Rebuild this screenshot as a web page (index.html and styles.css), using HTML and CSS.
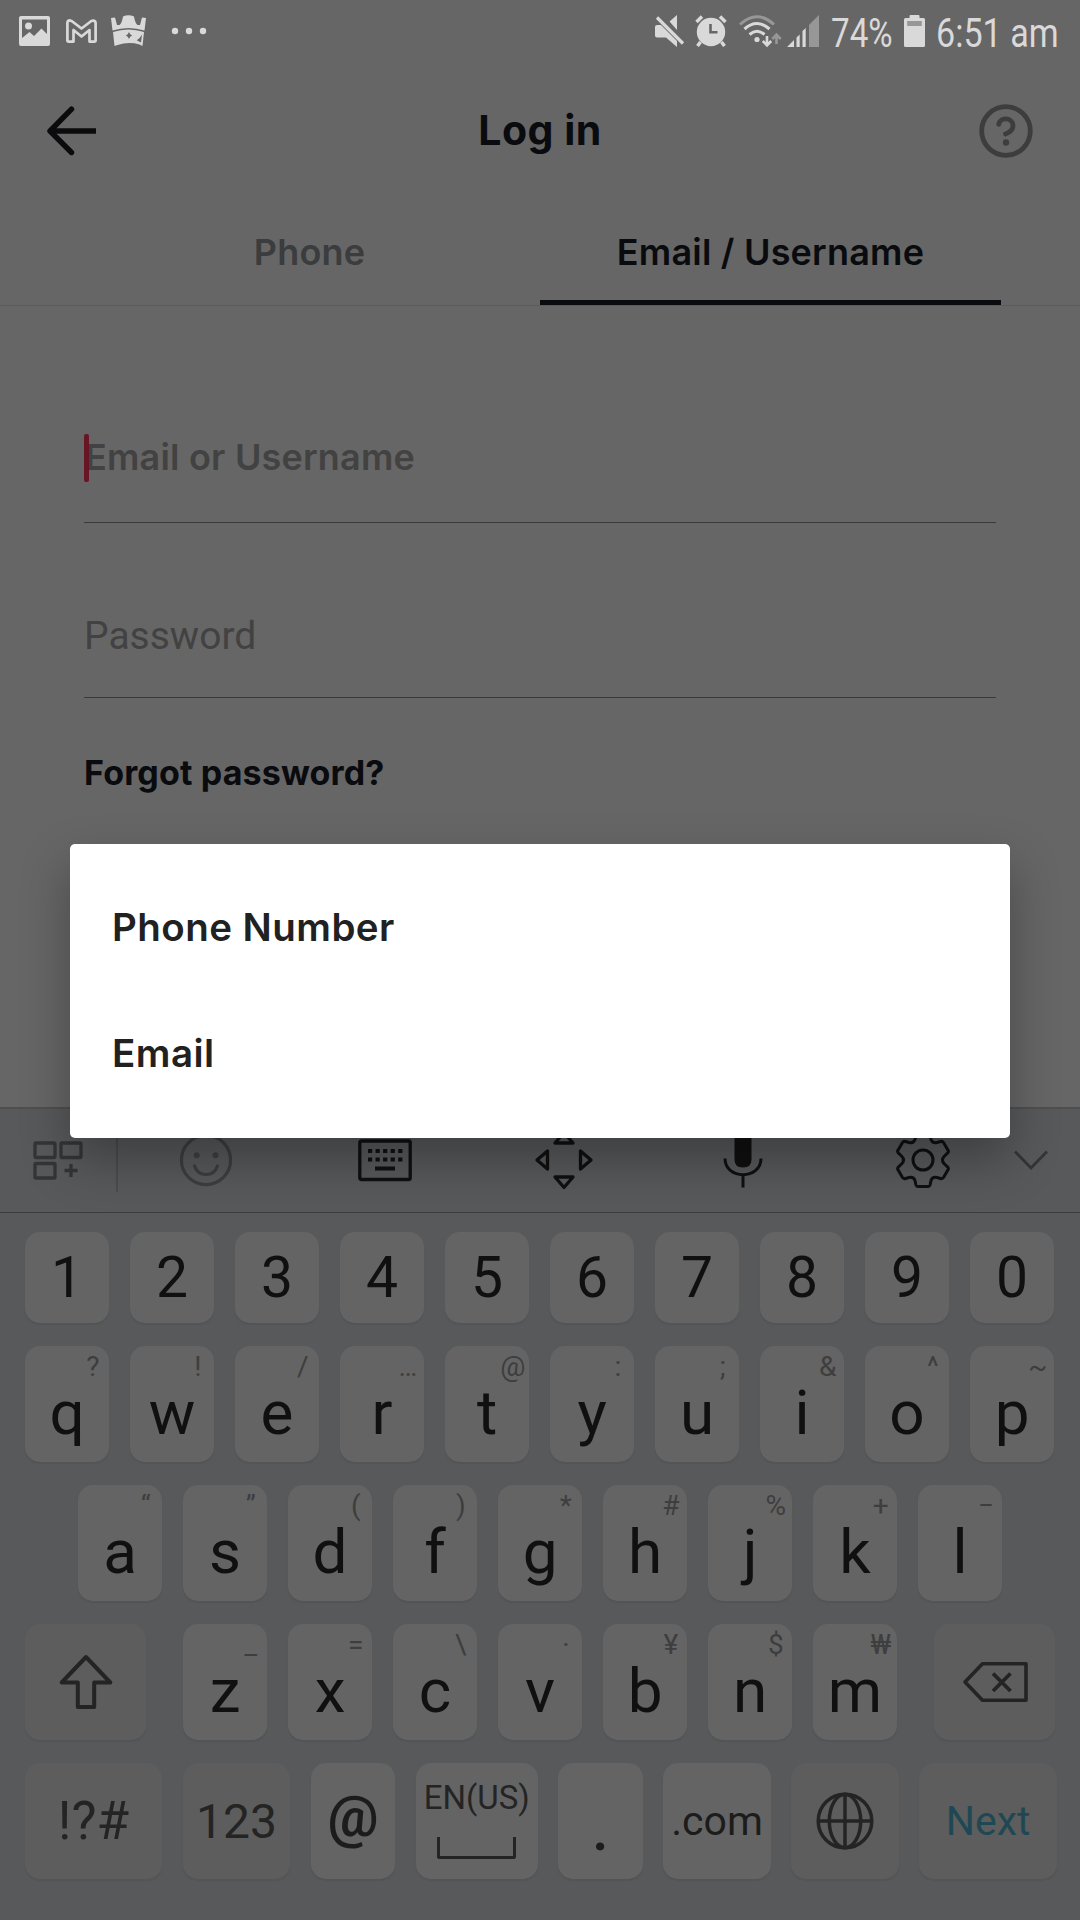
FILE: index.html
```html
<!DOCTYPE html>
<html lang="en">
<head>
<meta charset="utf-8">
<title>Log in</title>
<link rel="stylesheet" href="styles.css">
</head>
<body>
<div class="screen">
  <div class="status">
    <svg class="s-image" width="31" height="30" viewBox="0 0 31 30"><path fill="currentColor" fill-rule="evenodd" d="M2 0H29Q31 0 31 2V28Q31 30 29 30H2Q0 30 0 28V2Q0 0 2 0ZM3 3.5V22L10.500 16L15 20L22.500 12.500L28 18V3.500Z"/><circle cx="9.500" cy="10" r="3.500" fill="currentColor"/></svg>
    <svg class="s-mail" width="31" height="24" viewBox="0 0 31 24"><path fill="none" stroke="currentColor" stroke-width="2.700" stroke-linejoin="round" d="M1.400 21.500V4Q1.400 1.300 4 1.400L6 2.200L15.500 9.500L25 2.200Q27.500 .7 29.200 2.500L29.600 4V21.500Q29.600 22.600 28.300 22.600H23.500V11L15.500 17.500L7.500 11V22.600H2.700Q1.400 22.600 1.400 21.500Z"/></svg>
    <svg class="s-crown" width="35" height="32" viewBox="0 0 35 32"><path fill="currentColor" d="M0 3L4 2.500L6 10H8.500Q11 8 12 1.500Q17.500-1 23 1.500Q24 8 26.500 10H29L31 2.500L35 3L33.500 15.500Q17.500 10.500 1.500 15.500Z"/><path fill="currentColor" fill-rule="evenodd" d="M2 17Q17.500 12 33 17L31.500 31L28.500 29.500Q17.500 26.500 6.500 30L3.500 31ZM18 17L16.800 19.300L14.800 20.500L16.800 21.700L18 24L19.200 21.700L21.200 20.500L19.200 19.300ZM31 19.500Q29 23.500 25.700 25.300L30 27.500Z"/></svg>
    <svg class="s-more" width="36" height="8" viewBox="0 0 36 8"><g fill="currentColor"><circle cx="4" cy="4" r="3.200"/><circle cx="18" cy="4" r="3.200"/><circle cx="32" cy="4" r="3.200"/></g></svg>
    <svg class="s-mute" width="30" height="32" viewBox="0 0 30 32"><path fill="currentColor" d="M22 0V15L14.500 6.500ZM0 12Q0 10 2 10H6L22 26V32L11 22.500H2Q0 22.500 0 20.500Z"/><path stroke="currentColor" stroke-width="3.200" d="M2 2.500L28 28.500"/></svg>
    <svg class="s-alarm" width="32" height="32" viewBox="0 0 32 32"><circle cx="16" cy="17" r="14.200" fill="currentColor"/><path fill="none" stroke="currentColor" stroke-width="3.500" d="M1.500 7L7 1.500M25 1.500L30.500 7M5.500 27L2.500 31M26.500 27L29.500 31"/><path fill="none" stroke="#666" stroke-width="2.600" d="M15.500 9V17.200H22.500"/></svg>
    <svg class="s-wifi" width="43" height="33" viewBox="0 0 43 33"><g fill="none" stroke="currentColor" stroke-width="3"><path stroke="#979797" d="M1 9.500Q18 -6 35 9.500"/><path d="M5.500 14Q18 3 30.500 14M10.500 19.500Q18 13 25.500 19.500"/></g><circle cx="18" cy="24.500" r="2.600" fill="currentColor"/><path fill="none" stroke="currentColor" stroke-width="2.600" d="M28 21V30M23.800 26L28 30.300L32.200 26"/><path fill="none" stroke="#979797" stroke-width="2.600" d="M37.500 29V20M33.300 24L37.500 19.700L41.700 24"/></svg>
    <svg class="s-signal" width="32" height="32" viewBox="0 0 32 32"><path fill="currentColor" d="M0 32L7 25V32ZM9.500 22.500L12.700 19.500V32H9.500ZM15.500 16L18.700 13V32H15.500Z"/><path fill="#979797" d="M22 10L32 0V32H22Z"/></svg>
    <div class="s-pct"><span class="st">74%</span></div>
    <svg class="s-batt" width="21" height="32" viewBox="0 0 21 32"><path fill="currentColor" d="M1.500 3H5.500V1Q5.500 0 6.500 0H14.500Q15.500 0 15.500 1V3H19.500Q21 3 21 4.500V30.500Q21 32 19.500 32H1.500Q0 32 0 30.500V4.500Q0 3 1.500 3Z"/><path fill="#979797" d="M3.200 6H17.800V11H3.200Z"/></svg>
    <div class="s-time"><span class="st">6:51 am</span></div>
  </div>

  <header class="header">
    <svg width="50" height="50" viewBox="0 0 50 50"><path fill="none" stroke="#0b0b0d" stroke-width="5.400" stroke-linecap="round" stroke-linejoin="round" d="M24.500 3.200L3 25L24.500 46.500"/><path stroke="#0b0b0d" stroke-width="5.400" d="M4 25H49"/></svg>
    <h1 class="title">Log in</h1>
    <svg width="54" height="54" viewBox="0 0 54 54"><g fill="none" stroke="#3d3d3e" stroke-width="4.800" stroke-linecap="round"><circle cx="27" cy="27" r="24.300"/><path d="M19.800 20.200C20.500 16.500 23.500 14.800 26.500 14.800C30.500 14.800 34 17.500 34 21.800C34 26.500 30.500 28.500 26.500 30"/></g><circle cx="27" cy="38.500" r="3.200" fill="#3d3d3e"/></svg>
  </header>

  <nav class="tabs">
    <div class="tab"><span class="tab-phone">Phone</span></div>
    <div class="tab active"><span class="tab-email">Email / Username</span></div>
  </nav>

  <main class="form">
    <div class="field user"><span class="caret"></span><span class="user-text">Email or Username</span></div>
    <div class="field pass">Password</div>
    <div class="forgot"><span>Forgot password?</span></div>
  </main>

  <section class="keyboard">
    <div class="toolbar">
      <div class="cell edge"><svg width="50" height="56" viewBox="33 1131.500 50 56"><g fill="none" stroke="#353535" stroke-width="3.300"><rect x="35" y="1142.500" width="20" height="14.500" rx="1"/><rect x="61" y="1142.500" width="20" height="14.500" rx="1"/><rect x="35" y="1163" width="20" height="14.500" rx="1"/><path d="M64.500 1170H77.500M71 1163.500V1176.500"/></g></svg></div>
      <div class="cell split"><svg width="56" height="56" viewBox="0 0 56 56"><g fill="none" stroke="#3e3e3e" stroke-width="3.200" stroke-linecap="round"><circle cx="28" cy="28" r="24.600"/><path d="M16.500 34Q19.500 42.500 28 42.500Q36.500 42.500 39.500 34"/></g><circle cx="18.700" cy="23.300" r="3" fill="#404040"/><circle cx="37.500" cy="23.300" r="3" fill="#404040"/></svg></div>
      <div class="cell"><svg width="56" height="56" viewBox="0 0 56 56"><rect x="2.800" y="9" width="50.400" height="38.500" rx="1.500" fill="none" stroke="#101010" stroke-width="3.300"/><path stroke="#101010" stroke-width="4" stroke-dasharray="4.200 3.350" d="M11 19H46M11 27.500H46"/><path stroke="#101010" stroke-width="4" d="M18 36.500H38"/></svg></div>
      <div class="cell"><svg width="60" height="60" viewBox="-30 -30 60 60"><g fill="none" stroke="#101010" stroke-width="3.300" stroke-linejoin="round"><path d="M16.500 -9V9L27 0Z"/><path d="M-16.500 -9V9L-27 0Z"/><path d="M-9 17H9L0 27.500Z"/><path d="M-9 -17H9L0 -27.500Z"/></g></svg></div>
      <div class="cell"><svg width="44" height="60" viewBox="-22 -30 44 60"><path fill="#101010" d="M-8.500 -20Q-8.500 -28 0 -28Q8.500 -28 8.500 -20V-.5Q8.500 7.500 0 7.500Q-8.500 7.500 -8.500 -.5Z"/><path fill="none" stroke="#101010" stroke-width="3" d="M-18 -1.500C-18 20 18 20 18 -1.500M0 15V27.500"/></svg></div>
      <div class="cell"><svg class="gear" width="58" height="60" viewBox="-29 -30 58 60"><g fill="none" stroke="#101010" stroke-width="3" stroke-linejoin="round"><circle r="10"/><path d="M-5 26.500H5Q6.700 26.500 7.200 24.500L8 20.500Q9.500 16.500 14 17.500L17.500 18.500Q19.500 19 20.500 17.500L25 9.800Q26 8.300 24.500 6.800L21.500 4Q17.500 0 21.500 -4L24.500 -6.800Q26 -8.300 25 -9.800L20.500 -17.500Q19.500 -19 17.500 -18.500L14 -17.500Q9.500 -16.500 8 -20.500L7.200 -24.500Q6.700 -26.500 5 -26.500H-5Q-6.700 -26.500 -7.200 -24.500L-8 -20.500Q-9.500 -16.500 -14 -17.500L-17.500 -18.500Q-19.500 -19 -20.500 -17.500L-25 -9.800Q-26 -8.300 -24.500 -6.800L-21.500 -4Q-17.500 0 -21.500 4L-24.500 6.800Q-26 8.300 -25 9.800L-20.500 17.500Q-19.500 19 -17.500 18.500L-14 17.500Q-9.500 16.500 -8 20.500L-7.200 24.500Q-6.700 26.500 -5 26.500Z"/></g></svg></div>
      <div class="cell last"><svg width="36" height="20" viewBox="0 0 36 20"><path fill="none" stroke="#353535" stroke-width="2.800" d="M2 1.500L18 18L34 1.500"/></svg></div>
    </div>

    <div class="keys">
      <div class="row numbers">
        <div class="key">1</div><div class="key">2</div><div class="key">3</div><div class="key">4</div><div class="key">5</div><div class="key">6</div><div class="key">7</div><div class="key">8</div><div class="key">9</div><div class="key">0</div>
      </div>
      <div class="row letters">
        <div class="key">q<i>?</i></div><div class="key">w<i>!</i></div><div class="key">e<i>/</i></div><div class="key">r<i>…</i></div><div class="key">t<i>@</i></div><div class="key">y<i>:</i></div><div class="key">u<i>;</i></div><div class="key">i<i>&amp;</i></div><div class="key">o<i>^</i></div><div class="key">p<i>~</i></div>
      </div>
      <div class="row letters middle">
        <div class="key">a<i>“</i></div><div class="key">s<i>”</i></div><div class="key">d<i>(</i></div><div class="key">f<i>)</i></div><div class="key">g<i>*</i></div><div class="key">h<i>#</i></div><div class="key">j<i>%</i></div><div class="key">k<i>+</i></div><div class="key">l<i>−</i></div>
      </div>
      <div class="row letters">
        <div class="key fn shift"><svg width="56" height="58" viewBox="-28 -29 56 58"><path fill="none" stroke="#242424" stroke-width="4" stroke-linejoin="round" d="M0 -25L24.300 .5H8.200V25H-8.200V.5H-24.300Z"/></svg></div>
        <div class="key">z<i>_</i></div><div class="key">x<i>=</i></div><div class="key">c<i>\</i></div><div class="key">v<i>·</i></div><div class="key">b<i>¥</i></div><div class="key">n<i>$</i></div><div class="key">m<i>₩</i></div>
        <div class="key fn back"><svg width="68" height="44" viewBox="0 0 68 44"><g fill="none" stroke="#242424" stroke-width="3.600" stroke-linejoin="round"><path d="M21.500 3.700H65V40.300H21.500L4 22Z"/><path stroke-width="3.800" d="M32 13.500L49.500 31M49.500 13.500L32 31"/></g></svg></div>
      </div>
      <div class="row bottom">
        <div class="key fn w137 sym">!?#</div>
        <div class="key fn w107 num">123</div>
        <div class="key at">@</div>
        <div class="key w122 space"><span>EN(US)</span><b></b></div>
        <div class="key dot">.</div>
        <div class="key w107 com">.com</div>
        <div class="key fn w107"><svg width="58" height="60" viewBox="-29 -30 58 60"><g fill="none" stroke="#242424" stroke-width="3.500"><circle r="26.800"/><ellipse rx="15.700" ry="26.800"/><path d="M0 -27V27M-27 0H27"/></g></svg></div>
        <div class="key fn w137 next">Next</div>
      </div>
    </div>
  </section>

  <div class="dialog">
    <div class="option"><span class="opt-phone">Phone Number</span></div>
    <div class="option"><span class="opt-email">Email</span></div>
  </div>
</div>
</body>
</html>
```
FILE: styles.css
```css
* { box-sizing: border-box; }
body { margin: 0; }
svg { display: block; flex: none; }

.screen {
  position: relative;
  display: flex;
  flex-direction: column;
  width: 1080px;
  height: 1920px;
  overflow: hidden;
  background: #666;
  color: #0a0b0e;
  font-family: Inter, "Open Sans", sans-serif;
}

/* status bar */
.status {
  display: flex;
  align-items: center;
  height: 62px;
  padding-left: 19px;
  color: #d9d9d9;
}
.st {
  display: inline-block;
  font: 40px/60px Roboto, sans-serif;
  white-space: nowrap;
  transform-origin: 0 50%;
}
.s-mail { margin-left: 16px; }
.s-crown { margin-left: 14px; }
.s-more { margin-left: 25px; }
.s-mute { margin-left: 448px; }
.s-alarm { margin-left: 10px; }
.s-wifi { margin-left: 12px; }
.s-signal { margin-left: 5px; }
.s-pct, .s-time { flex: none; padding-top: 6px; }
.s-pct { width: 61px; margin-left: 12px; }
.s-batt { margin-left: 12px; }
.s-time { width: 123px; margin-left: 11px; }
.s-pct .st { transform: scaleX(.83); }
.s-time .st { transform: scaleX(.853); }

/* page header */
.header {
  display: flex;
  align-items: center;
  justify-content: space-between;
  height: 138px;
  padding: 0 47px;
}
.title {
  margin: 0 0 2px 4px;
  font-size: 41px;
  font-weight: 700;
  line-height: 50px;
  letter-spacing: .5px;
}

.tabs {
  display: flex;
  height: 106px;
  padding: 0 79px;
  border-bottom: 1px solid #5b5b5b;
}
.tab {
  flex: 1;
  padding-top: 27px;
  text-align: center;
  color: #3b3c3d;
  font-size: 36px;
  font-weight: 560;
  line-height: 50px;
  letter-spacing: .2px;
}
.tab.active { color: #0a0b0e; border-bottom: 5px solid #0a0b0e; }

/* form */
.form { flex: none; height: 801px; padding: 92px 84px 0; }
.field { border-bottom: 1px solid #3a3a3a; color: #424242; }
.user {
  position: relative;
  height: 125px;
  padding: 34px 0 0 1px;
  font-size: 36px;
  font-weight: 560;
  line-height: 50px;
  letter-spacing: .2px;
}
.caret {
  position: absolute;
  left: 0;
  top: 36px;
  width: 5px;
  height: 48px;
  border-radius: 2px;
  background: rgba(104, 17, 34, .95);
}
.pass {
  height: 175px;
  padding-top: 88px;
  font: 39px/50px Roboto, sans-serif;
}
.forgot {
  padding-top: 50px;
  font-size: 34px;
  font-weight: 700;
  line-height: 50px;
  letter-spacing: .15px;
}

/* keyboard */
.keyboard {
  flex: 1;
  background: #57595b;
  border-top: 2px solid #4e4f50;
  color: #101010;
  font-family: Roboto, sans-serif;
}
.toolbar {
  display: flex;
  height: 104px;
  padding-bottom: 2px;
  border-bottom: 1px solid #3b3c3d;
}
.cell {
  display: flex;
  align-items: center;
  justify-content: center;
  width: 179px;
}
.edge { width: 116px; }
.split {
  background: linear-gradient(#4b4c4c, #4b4c4c) 0 21px / 2px 62px no-repeat;
}
.last { width: 40px; }
.gear { transform: translateX(1px); }
.keys {
  display: flex;
  flex-direction: column;
  gap: 23px;
  padding: 19px 0 0 24.8px;
}
.row { display: flex; gap: 20.5px; height: 116px; }
.middle { margin-left: 53px; }
.key {
  position: relative;
  display: flex;
  flex: none;
  align-items: center;
  justify-content: center;
  width: 84.5px;
  border-radius: 15px;
  background: #646464;
  box-shadow: 0 2px 1px #535456;
}
.numbers { height: 91px; font-size: 57px; }
.letters .key { padding-top: 16px; font-size: 62px; }
.key i {
  position: absolute;
  top: 1px;
  right: 0;
  width: 33px;
  display: flex;
  justify-content: center;
  font: normal 28px/40px Roboto, sans-serif;
  color: #3e3e3e;
}
.key.fn { background: #5d5d5d; color: #242424; }
.letters .fn { width: 121.5px; padding-top: 0; }
.shift { margin-right: 16px; }
.back { margin-left: 16px; }
.key.w107 { width: 107.5px; }
.key.w122 { width: 122px; }
.key.w137 { width: 137.5px; }
.sym { font-size: 53px; }
.num { font-size: 48px; }
.at { padding-bottom: 9px; font-size: 57px; font-weight: 600; color: #1c1c1c; }
.key.space {
  flex-direction: column;
  padding-bottom: 5px;
  color: #242424;
  font-size: 33px;
  line-height: 38px;
}
.space b {
  width: 79px;
  height: 22px;
  margin-top: 20px;
  border: 3.5px solid #242424;
  border-top: 0;
  border-radius: 0 0 3px 3px;
}
.dot { font-size: 74px; color: #1c1c1c; padding-top: 6px; }
.com { font-size: 41px; color: #1c1c1c; }
.key.next { font-size: 41px; color: #204854; }

/* recovery method dialog */
.dialog {
  position: absolute;
  left: 70px;
  top: 844px;
  width: 940px;
  height: 294px;
  padding: 20px 42px;
  border-radius: 5px;
  background: #fff;
  box-shadow: 0 22px 50px rgba(0, 0, 0, .3);
  color: #212121;
}
.option {
  height: 126px;
  font-size: 38.5px;
  font-weight: 580;
  line-height: 126px;
  letter-spacing: .45px;
}
```
